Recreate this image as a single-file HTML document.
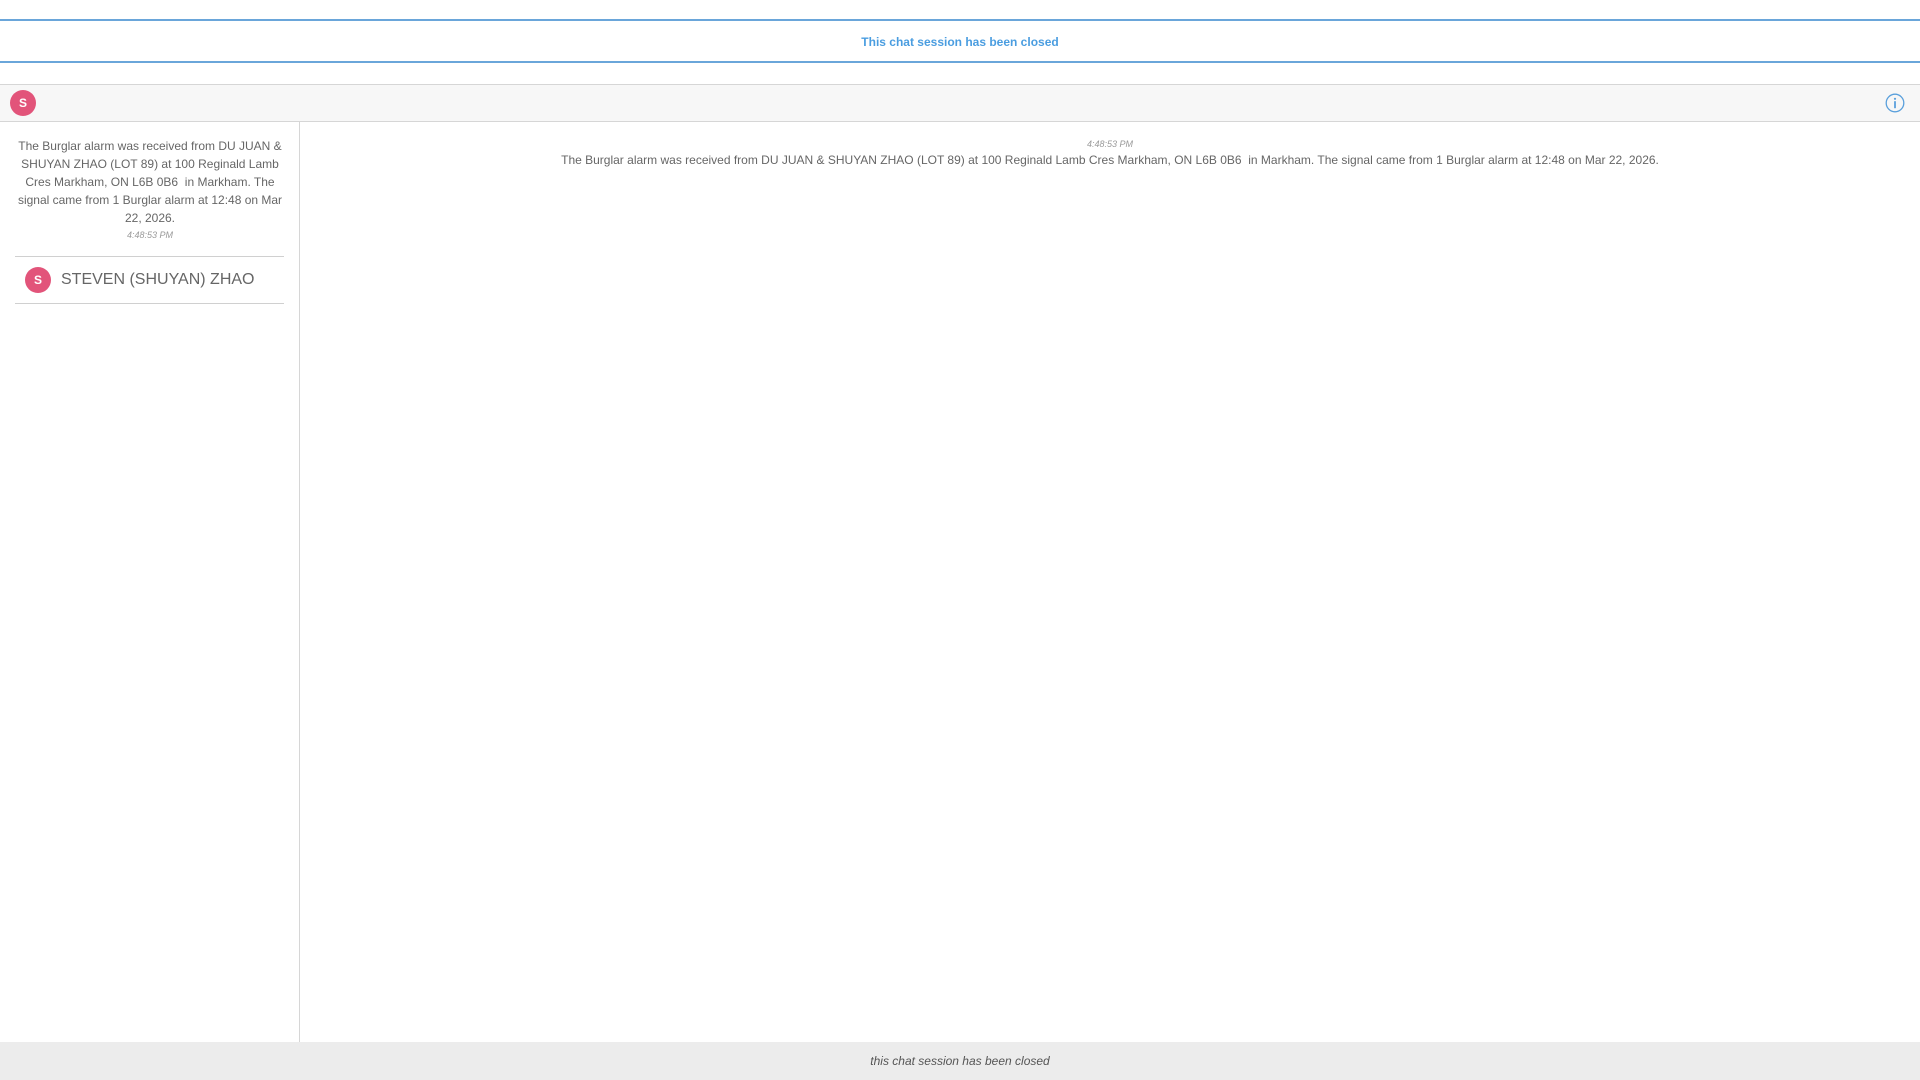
<!DOCTYPE html>
<html><head><meta charset="utf-8"><style>
*{box-sizing:border-box;margin:0;padding:0}
body{width:1920px;height:1080px;overflow:hidden;background:#fff;font-family:"Liberation Sans",Arial,sans-serif;color:#666;position:relative}
.banner{position:absolute;top:19px;left:0;width:1920px;height:44px;border-top:2px solid #6aa6da;border-bottom:2px solid #6aa6da;text-align:center;line-height:42px;font-size:12px;font-weight:bold;color:#4a9de0}
.bar{position:absolute;top:84px;left:0;width:1920px;height:38px;background:#f7f7f7;border-top:1px solid #d6d6d6;border-bottom:1px solid #d6d6d6}
.av{position:absolute;width:26px;height:26px;border-radius:50%;background:#e2547a;color:#fff;font-size:12px;font-weight:bold;text-align:center;line-height:26px}
.side{position:absolute;top:122px;left:0;width:300px;height:920px;border-right:1px solid #d6d6d6}
.msg{position:absolute;left:12px;width:276px;top:15px;text-align:center;font-size:12px;line-height:18px;color:#666}
.time{font-size:9px;font-style:italic;color:#999;line-height:14px}
.sep{position:absolute;left:15px;width:269px;border-top:1px solid #d0d0d0}
.name{position:absolute;left:61px;top:146px;font-size:16px;color:#666;line-height:24px}
.main{position:absolute;top:122px;left:300px;width:1620px;text-align:center}
.footer{position:absolute;top:1042px;left:0;width:1920px;height:38px;background:#ececec;text-align:center;line-height:38px;font-size:12px;font-style:italic;color:#555}
</style></head><body>
<div class="banner">This chat session has been closed</div>
<div class="bar">
<div class="av" style="left:10px;top:5px">S</div>
<svg style="position:absolute;left:1885px;top:8px" width="20" height="20" viewBox="0 0 20 20"><circle cx="10" cy="10" r="8.8" fill="none" stroke="#5aa0dc" stroke-width="1.3"/><circle cx="10" cy="5.8" r="1.1" fill="#5aa0dc"/><rect x="9.1" y="8.2" width="1.8" height="7" fill="#5aa0dc"/></svg>
</div>
<div class="side">
<div class="msg">The Burglar alarm was received from DU JUAN &amp; SHUYAN ZHAO (LOT 89) at 100 Reginald Lamb Cres Markham, ON L6B 0B6&nbsp; in Markham. The signal came from 1 Burglar alarm at 12:48 on Mar 22, 2026.<div class="time" style="margin-top:1px">4:48:53 PM</div></div>
<div class="sep" style="top:134px"></div>
<div class="av" style="left:25px;top:145px">S</div>
<div class="name">STEVEN (SHUYAN) ZHAO</div>
<div class="sep" style="top:181px"></div>
</div>
<div class="main">
<div class="time" style="margin-top:15px;line-height:14px">4:48:53 PM</div>
<div style="font-size:12px;line-height:18px;color:#666">The Burglar alarm was received from DU JUAN &amp; SHUYAN ZHAO (LOT 89) at 100 Reginald Lamb Cres Markham, ON L6B 0B6&nbsp; in Markham. The signal came from 1 Burglar alarm at 12:48 on Mar 22, 2026.</div>
</div>
<div class="footer">this chat session has been closed</div>
</body></html>
